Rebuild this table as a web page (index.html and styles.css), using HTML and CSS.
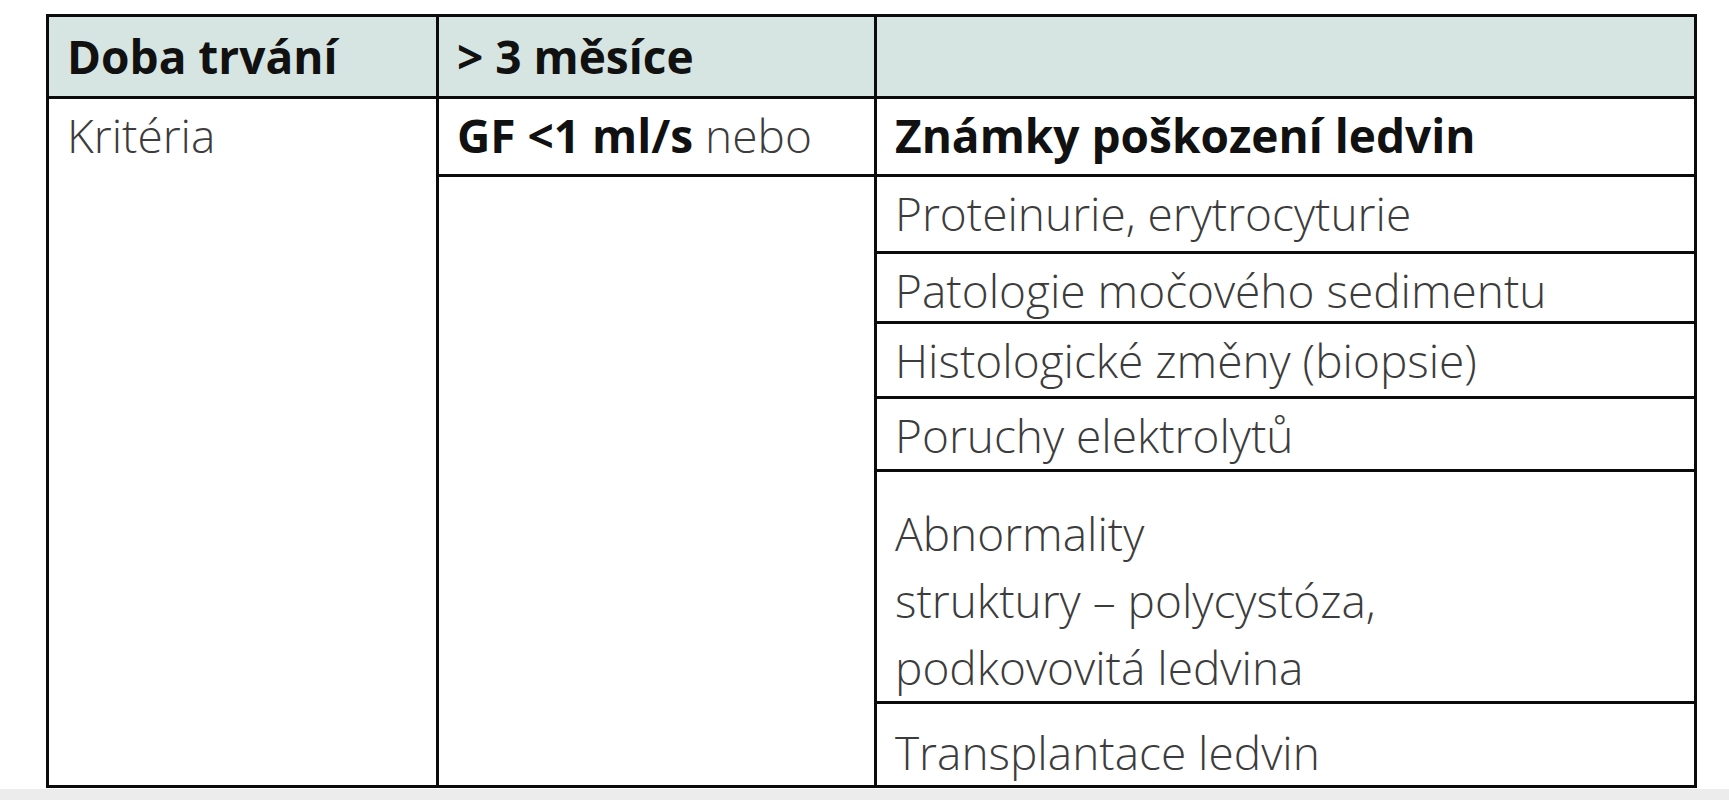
FILE: index.html
```html
<!DOCTYPE html>
<html lang="cs">
<head>
<meta charset="utf-8">
<title>Kritéria</title>
<link rel="stylesheet" href="styles.css">
</head>
<body>
<div class="page">
  <table class="crit">
    <tr class="r-head">
      <th class="c1">Doba trvání</th>
      <th class="c2">&gt; 3 měsíce</th>
      <th class="c3"></th>
    </tr>
    <tr class="r-a">
      <td rowspan="8">Kritéria</td>
      <td><b>GF &lt;1 ml/s</b> nebo</td>
      <td><b>Známky poškození ledvin</b></td>
    </tr>
    <tr class="r-b">
      <td rowspan="7"></td>
      <td>Proteinurie, erytrocyturie</td>
    </tr>
    <tr class="r-c"><td>Patologie močového sedimentu</td></tr>
    <tr class="r-d"><td>Histologické změny (biopsie)</td></tr>
    <tr class="r-e"><td>Poruchy elektrolytů</td></tr>
    <tr class="r-f"><td class="multi">Abnormality<br>struktury – polycystóza,<br>podkovovitá ledvina</td></tr>
    <tr class="r-g"><td class="low">Transplantace ledvin</td></tr>
  </table>
  <div class="band"></div>
</div>
</body>
</html>
```
FILE: styles.css
```css
html, body {
  margin: 0;
  padding: 0;
  background: #ffffff;
}
.page {
  width: 1729px;
  height: 800px;
  display: flex;
  flex-direction: column;
  overflow: hidden;
}
.crit {
  margin: 14px 0 0 46px;
  width: 1651px;
  border-collapse: collapse;
  table-layout: fixed;
  font-family: "Open Sans", "Liberation Sans", sans-serif;
  font-size: 46px;
  line-height: 61px;
  color: #3c3c3c;
  font-weight: 300;
}
.crit th, .crit td {
  border: 3px solid #0b0b0b;
  padding: 0 18px;
  text-align: left;
  vertical-align: top;
}
.crit th {
  background: #d6e5e2;
  color: #111111;
  font-weight: 700;
  vertical-align: middle;
}
.crit b {
  font-weight: 700;
  color: #111111;
}
.c1 { width: 351px; }
.c2 { width: 399px; }
.r-head { height: 82px; }
.r-a { height: 78px; }
.r-b { height: 77px; }
.r-c { height: 70px; }
.r-d { height: 75px; }
.r-e { height: 73px; }
.r-f { height: 231px; }
.r-g { height: 84px; }
.crit td { padding-top: 6px; }
.crit td.multi { padding-top: 28px; line-height: 67px; }
.crit td.low { padding-top: 18px; }
.band {
  flex: 1;
  margin-top: 1px;
  background: #ececec;
}
```
